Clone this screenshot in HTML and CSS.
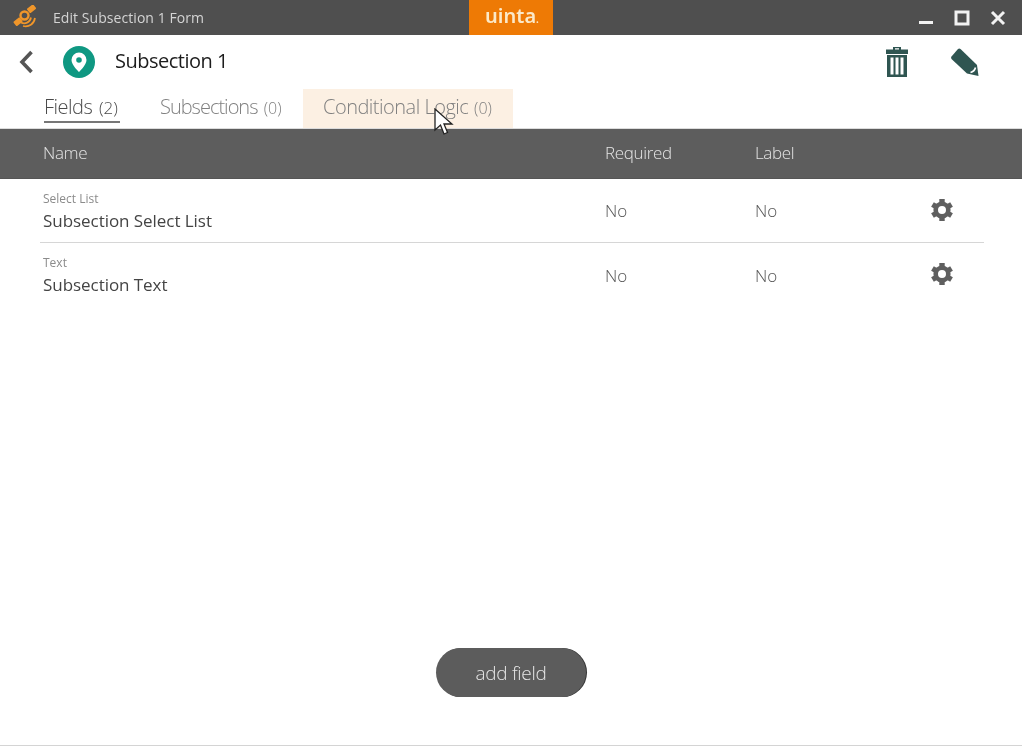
FILE: index.html
```html
<!DOCTYPE html>
<html lang="en">
<head>
<meta charset="utf-8">
<title>Edit Subsection 1 Form</title>
<link rel="stylesheet" href="styles.css">
</head>
<body>
<div class="app">
  <header class="titlebar">
    <div class="title-left">
      <svg class="app-icon" width="24" height="24" viewBox="0 0 24 24">
        <g fill="#f0962a">
          <rect x="14.5" y="1" width="8" height="5.5" rx=".8" transform="rotate(-38 18.5 3.700)"/>
          <rect x="1" y="14" width="8" height="5.5" rx=".8" transform="rotate(-38 5 16.700)"/>
        </g>
        <circle cx="11.5" cy="10.5" r="4" fill="none" stroke="#f0962a" stroke-width="2.4"/>
        <path d="M8 17.500c4 2 9 0 10-5M10 21c6 1.500 11-2 12-8" fill="none" stroke="#f0962a" stroke-width="1.700"/>
      </svg>
      <span class="title-text">Edit Subsection 1 Form</span>
    </div>
    <div class="brand">uinta<span class="brand-dot">.</span></div>
    <div class="win-controls">
      <svg width="16" height="16" viewBox="0 0 16 16"><rect x="1" y="11" width="14" height="3" fill="#f2f2f2"/></svg>
      <svg width="16" height="16" viewBox="0 0 16 16"><rect x="2" y="2" width="12" height="12" fill="none" stroke="#f2f2f2" stroke-width="3"/></svg>
      <svg width="16" height="16" viewBox="0 0 16 16"><path d="M2 2l12 12M14 2L2 14" stroke="#f2f2f2" stroke-width="3"/></svg>
    </div>
  </header>

  <div class="subheader">
    <div class="sub-left">
      <svg class="back" width="16" height="26" viewBox="0 0 16 26"><path d="M13.500 3L4 13l9.500 10" fill="none" stroke="#555" stroke-width="3.600"/></svg>
      <svg class="pin-badge" width="32" height="32" viewBox="0 0 32 32">
        <circle cx="16" cy="16" r="16" fill="#0f9882"/>
        <path fill-rule="evenodd" d="M16 6.500a7.500 7.500 0 0 0-7.500 7.500c0 5 7.500 12 7.500 12s7.500-7 7.500-12A7.500 7.500 0 0 0 16 6.500zm0 4.700a2.800 2.800 0 1 1 0 5.600 2.800 2.800 0 0 1 0-5.600z" fill="#fff"/>
      </svg>
      <h1 class="sub-title">Subsection 1</h1>
    </div>
    <div class="sub-actions">
      <svg width="24" height="32" viewBox="0 0 24 32" fill="#2f5551">
        <path fill-rule="evenodd" d="M8 1h8v2.500h7V8H1V3.500h7zM10 2.200v1.300h4V2.200z"/>
        <path fill-rule="evenodd" d="M2 9h20v22H2zM5.500 11.500v17h3v-17zm5 0v17h3v-17zm5 0v17h3v-17z"/>
      </svg>
      <svg width="30" height="30" viewBox="0 0 30 30">
        <path fill="#2f5551" d="M1.500 9.500L8 2q1.200-1 2.500 0L27 18l1.500 11-11.500-2.500L1.500 12q-1-1.200 0-2.500z"/>
        <path fill="none" stroke="#fff" stroke-width="1.600" d="M20.500 25.500q4-1 5-5"/>
      </svg>
    </div>
  </div>

  <nav class="tabs">
    <a class="tab tab-active">Fields <small>(2)</small></a>
    <a class="tab tab-second">Subsections <small>(0)</small></a>
    <a class="tab tab-hover">Conditional Logic <small>(0)</small></a>
  </nav>

  <div class="table-head row-grid">
    <span>Name</span><span>Required</span><span>Label</span>
  </div>

  <div class="rows">
    <div class="row row-grid row-sep">
      <div class="name-cell"><div class="type">Select List</div><div class="name">Subsection Select List</div></div>
      <span class="val">No</span><span class="val">No</span>
      <svg class="gear" width="24" height="24" viewBox="0 0 24 24"><use href="#gear"/></svg>
    </div>
    <div class="row row-grid">
      <div class="name-cell"><div class="type">Text</div><div class="name">Subsection Text</div></div>
      <span class="val">No</span><span class="val">No</span>
      <svg class="gear" width="24" height="24" viewBox="0 0 24 24"><use href="#gear"/></svg>
    </div>
  </div>

  <div class="footer"><button class="add-btn" type="button">add field</button></div>

  <svg class="cursor" width="20" height="28" viewBox="0 0 20 28">
    <path d="M1 1v21l5.500-5 3.500 9 3.500-1.500-3.500-8.500H18z" fill="#fff" stroke="#222" stroke-width="1.300"/>
  </svg>
</div>
<svg width="0" height="0" class="defs">
  <symbol id="gear" viewBox="0 0 24 24">
    <g fill="#5f5f5f">
      <rect x="9.300" y="1" width="5.400" height="5"/>
      <rect x="9.300" y="1" width="5.400" height="5" transform="rotate(60 12 12)"/>
      <rect x="9.300" y="1" width="5.400" height="5" transform="rotate(120 12 12)"/>
      <rect x="9.300" y="1" width="5.400" height="5" transform="rotate(180 12 12)"/>
      <rect x="9.300" y="1" width="5.400" height="5" transform="rotate(240 12 12)"/>
      <rect x="9.300" y="1" width="5.400" height="5" transform="rotate(300 12 12)"/>
    </g>
    <circle cx="12" cy="12" r="6.300" fill="none" stroke="#5f5f5f" stroke-width="4.600"/>
  </symbol>
</svg>
</body>
</html>
```

FILE: styles.css
```css
* { box-sizing: border-box; }
html, body { margin: 0; height: 100%; overflow: hidden; background: #fff; }
body { font-family: "Open Sans", "Noto Sans", sans-serif; }
.defs { position: absolute; }
.app { position: relative; width: 1022px; height: 746px; display: flex; flex-direction: column; border-bottom: 1px solid #d4d4d4; will-change: transform; }

.titlebar { height: 35px; flex: none; background: #4f4f4f; display: grid; grid-template-columns: 469px 84px 1fr; grid-template-rows: 35px; }
.title-left { display: flex; align-items: center; padding: 0 0 1px 13px; gap: 16px; }
.title-text { color: #d4d4d4; font-size: 14px; letter-spacing: .06px; }
.brand { background: #ee7a05; color: #fbe9c8; font-size: 20px; font-weight: 600; text-align: center; line-height: 32px; letter-spacing: 0; font-family: "Noto Sans", sans-serif; padding-left: 2px; }
.brand-dot { font-size: 10px; }
.win-controls { display: flex; justify-content: flex-end; align-items: center; gap: 20px; padding-right: 16px; }

.subheader { height: 54px; flex: none; display: flex; justify-content: space-between; align-items: center; padding-bottom: 1px; }
.sub-left { display: flex; align-items: center; padding-left: 18px; }
.back { margin-right: 29px; }
.pin-badge { margin-right: 20px; }
.sub-title { margin: 0 0 2px; font-size: 20px; font-weight: 400; color: #1d1d1d; letter-spacing: -.5px; }
.sub-actions { display: flex; align-items: center; gap: 41px; padding-right: 42px; }

.tabs { height: 40px; flex: none; display: flex; padding-left: 44px; border-bottom: 1px solid #dcdcdc; }
.tab { font-size: 20px; font-weight: 300; color: #808080; letter-spacing: -.5px; padding-top: 4px; height: 39px; white-space: nowrap; }
.tab small { font-size: 16px; font-weight: 300; letter-spacing: 0; margin-left: 1px; }
.tab-active { width: 76px; color: #4a4a4a; height: 34px; border-bottom: 2px solid #777; margin-right: 40px; }
.tab-active small { font-size: 17px; margin-left: 2px; }
.tab-second { width: 122px; margin-right: 21px; letter-spacing: -1px; }
.tab-second small { margin-left: 2px; }
.tab-hover { width: 210px; background: #fcf0e3; padding-left: 20px; }

.row-grid { display: grid; grid-template-columns: 562px 150px 175px 1fr; align-items: center; }
.table-head { height: 50px; flex: none; background: #5d5d5d; color: #e4e4e4; font-size: 17px; font-weight: 300; padding: 0 0 2px 43px; letter-spacing: -.35px; border-bottom: 1px solid #555; }

.rows { flex: none; }
.row { height: 64px; margin-left: 40px; margin-right: 38px; padding-left: 3px; }
.row-sep { border-bottom: 1px solid #d6d6d6; }
.name-cell { padding-top: 2px; }
.row-sep .name-cell { padding-top: 3px; }
.type { font-size: 12px; color: #8b8b8b; letter-spacing: 0; line-height: 16px; }
.name { font-size: 17px; color: #444; letter-spacing: -.05px; line-height: 27px; }
.val { font-size: 17px; font-weight: 300; color: #555; padding-top: 1px; }
.row-sep .val { margin-top: -2px; }
.gear { margin-top: -3px; }
.row-sep .gear { margin-top: -1px; }

.footer { flex: 1; display: flex; justify-content: center; padding-top: 341px; }
.add-btn { width: 150px; height: 49px; border: 0; border-radius: 25px; background: #5c5c5c; color: #e6e6e6; font: 300 19px "Open Sans", sans-serif; letter-spacing: -.3px; box-shadow: 1px 0 0 #333; }

.cursor { position: absolute; left: 434px; top: 108px; }
```
